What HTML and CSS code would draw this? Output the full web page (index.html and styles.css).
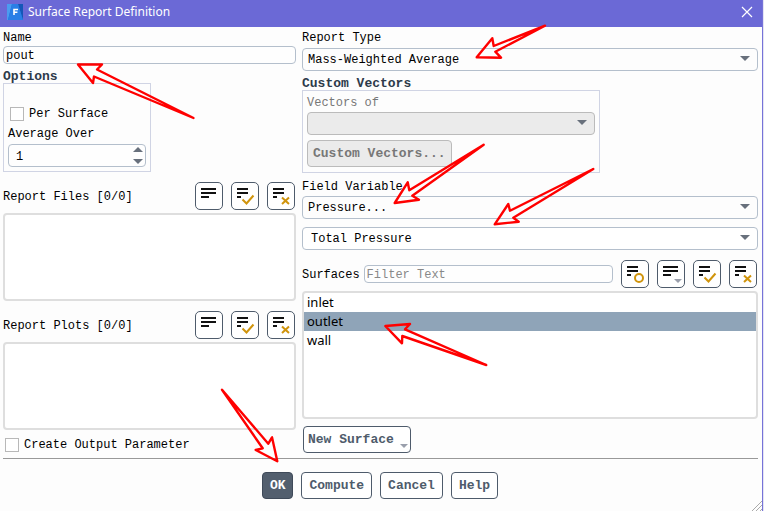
FILE: index.html
```
<!DOCTYPE html>
<html lang="en">
  <head>
    <meta charset="utf-8">
    <title>Surface Report Definition</title>
    <link rel="stylesheet" href="styles.css">
  </head>
  <body>
    <!-- shared icon shapes, all on the 28px button grid -->
    <svg class="defs" width="0" height="0">
      <symbol id="lines" viewBox="0 0 28 28">
        <path d="M6 6h15v2H6zM6 10h15v2H6zM6 14h8v2H6z" fill="#111"/>
      </symbol>
      <symbol id="lines-short" viewBox="0 0 28 28">
        <path d="M6 6h11v2H6zM6 10h11v2H6zM6 14h4v2H6z" fill="#111"/>
      </symbol>
      <symbol id="check" viewBox="0 0 28 28">
        <use href="#lines-short"/>
        <path d="M11.5 17.5l4 4L22.5 13.5" fill="none" stroke="#d0940c" stroke-width="2"/>
      </symbol>
      <symbol id="cross" viewBox="0 0 28 28">
        <use href="#lines-short"/>
        <path d="M15 15.5l7 6.5M22 15.5l-7 6.5" fill="none" stroke="#d0940c" stroke-width="2"/>
      </symbol>
      <symbol id="ring" viewBox="0 0 28 28">
        <use href="#lines-short"/>
        <circle cx="18" cy="18" r="4" fill="none" stroke="#d0940c" stroke-width="2"/>
      </symbol>
      <symbol id="menu" viewBox="0 0 28 28">
        <use href="#lines"/>
        <path d="M17 19h8l-4 4z" fill="#9a9fac"/>
      </symbol>
    </svg>

    <div class="window">
      <header class="titlebar">
        <svg class="logo" viewBox="0 0 16 16">
          <path d="M0 0h16v16H0z" fill="#1c6fd8"/>
          <path d="M0 0h5L1 16H0z" fill="#4b9cf0"/>
          <path d="M11 0h5v16z" fill="#1557b8"/>
          <path d="M5 0h6l5 16H1z" fill="#2a7fe6"/>
          <path d="M7 11V5.5h4M7 8.2h3.4" fill="none" stroke="#fff" stroke-width="1.6"/>
        </svg>
        <h1>Surface Report Definition</h1>
        <button class="close" aria-label="Close">
          <svg width="12" height="12" viewBox="0 0 12 12"><path d="M1 1l10 10M11 1L1 11" stroke="#fff" stroke-width="1.2"/></svg>
        </button>
      </header>

      <main class="columns">
        <section>
          <label class="label" for="name">Name</label>
          <input class="text" id="name" type="text" value="pout">

          <h2>Options</h2>
          <div class="group options">
            <label class="check"><input type="checkbox"> Per Surface</label>
            <label class="label" for="average">Average Over</label>
            <span class="spinner"><input id="average" type="number" value="1"></span>
          </div>

          <div class="toolbar files">
            <label for="files">Report Files [0/0]</label>
            <button class="icon" aria-label="List options"><svg><use href="#lines"/></svg></button>
            <button class="icon" aria-label="Select all"><svg><use href="#check"/></svg></button>
            <button class="icon" aria-label="Deselect all"><svg><use href="#cross"/></svg></button>
          </div>
          <select class="list" id="files" multiple></select>

          <div class="toolbar">
            <label for="plots">Report Plots [0/0]</label>
            <button class="icon" aria-label="List options"><svg><use href="#lines"/></svg></button>
            <button class="icon" aria-label="Select all"><svg><use href="#check"/></svg></button>
            <button class="icon" aria-label="Deselect all"><svg><use href="#cross"/></svg></button>
          </div>
          <select class="list" id="plots" multiple></select>

          <label class="check output"><input type="checkbox"> Create Output Parameter</label>
        </section>

        <section>
          <label class="label" for="type">Report Type</label>
          <span class="dropdown type">
            <select id="type"><option>Mass-Weighted Average</option></select>
          </span>

          <h2>Custom Vectors</h2>
          <div class="group vectors">
            <label class="label" for="vectors">Vectors of</label>
            <span class="dropdown">
              <select id="vectors" disabled></select>
            </span>
            <button class="btn" disabled>Custom Vectors...</button>
          </div>

          <label class="label field" for="field">Field Variable</label>
          <span class="dropdown">
            <select id="field"><option>Pressure...</option></select>
          </span>
          <span class="dropdown sub">
            <select aria-label="Field component"><option>Total Pressure</option></select>
          </span>

          <div class="toolbar">
            <label for="surfaces">Surfaces</label>
            <input class="text filter" type="text" placeholder="Filter Text" aria-label="Filter surfaces">
            <button class="icon" aria-label="Toggle filter"><svg><use href="#ring"/></svg></button>
            <button class="icon" aria-label="List menu"><svg><use href="#menu"/></svg></button>
            <button class="icon" aria-label="Select all"><svg><use href="#check"/></svg></button>
            <button class="icon" aria-label="Deselect all"><svg><use href="#cross"/></svg></button>
          </div>
          <select class="list surfaces" id="surfaces" multiple>
            <option>inlet</option>
            <option selected>outlet</option>
            <option>wall</option>
          </select>

          <button class="btn new">New Surface</button>
        </section>
      </main>

      <footer>
        <button class="btn primary">OK</button>
        <button class="btn">Compute</button>
        <button class="btn">Cancel</button>
        <button class="btn">Help</button>
      </footer>

      <svg class="grip" width="10" height="10" viewBox="0 0 10 10"><path d="M0 10L10 0M4 10l6-6M8 10l2-2" stroke="#aaa"/></svg>

      <!-- red pointers over the dialog -->
      <svg class="pointers" width="764" height="511" viewBox="0 0 764 511">
        <path d="M78 64.5H102L97 69.5L193.5 118L94 76.5L93 83Z"/>
        <path d="M476.7 57.3L492.3 38.3L493.7 46L545 25.7L495.3 51.7L501 57.7Z"/>
        <path d="M394.7 203L407.7 182.3L409.3 190.3L483.7 144.7L412.3 195.7L419 199.7Z"/>
        <path d="M494.7 224.3L508.3 204L510 210.7L593.3 169L513.3 217.7L518.7 221.7Z"/>
        <path d="M385.3 326L410 324L405 329.3L486.3 365L402.3 336L402 343.3Z"/>
        <path d="M277.3 461.3L272 437.3L268.3 443.7L222 389.7L262.7 448.3L255.7 450Z"/>
      </svg>
    </div>
  </body>
</html>
```
FILE: styles.css
```
* {
  box-sizing: border-box;
}
body {
  margin: 0;
  background: #e4e4f4;
  font: 12px/15px "Liberation Mono", monospace;
  color: #000;
}
input, select, button {
  margin: 0;
  font: inherit;
  color: inherit;
}
.defs {
  position: absolute;
}
.window {
  position: relative;
  display: flex;
  flex-direction: column;
  min-height: 100vh;
  margin-right: 1px;
  border-right: 1px solid #7673d8;
  background: #fdfdfd;
}

/* title bar */
.titlebar {
  display: flex;
  align-items: center;
  height: 27px;
  padding: 0 9px 4px 7px;
  background: #6b69d6;
  color: #fff;
}
.logo {
  width: 16px;
  height: 16px;
  margin-right: 5px;
}
h1 {
  flex: 1;
  margin: 0;
  font: 12px/17px "Noto Sans", sans-serif;
}
.close {
  display: flex;
  padding: 0;
  border: 0;
  background: none;
}

/* two columns */
.columns {
  display: grid;
  grid-template-columns: 293fr 456fr;
  gap: 6px;
  margin: 0 4px 0 3px;
  padding: 4px 0 5px;
  border-bottom: 1px solid #999;
}
section {
  min-width: 0;
}
.label {
  display: block;
}
h2 {
  margin: 6px 0 0;
  font-size: 13px;
  line-height: 13px;
  color: #2d3a4a;
}
.text {
  display: block;
  width: 100%;
  height: 18px;
  padding: 2px 2px 0;
  border: 1px solid #b4bfcc;
  border-radius: 4px;
  background: #fefefe;
}
.text::placeholder {
  color: #888;
}
.group {
  border: 1px solid #d0d4e4;
}
.options {
  width: 148px;
  padding: 23px 4px 4px;
}
.check {
  display: flex;
  align-items: center;
  gap: 5px;
  height: 14px;
  padding-left: 2px;
}
.check input {
  appearance: none;
  width: 14px;
  height: 14px;
  border: 1px solid #b8b8b8;
  background: #fff;
}
.options .check {
  margin-bottom: 6px;
}
.output {
  margin-top: 8px;
}

/* number box with up and down arrows */
.spinner {
  display: block;
  position: relative;
  margin-top: 2px;
}
.spinner input {
  appearance: textfield;
  display: block;
  width: 100%;
  height: 23px;
  padding: 2px 7px 0;
  border: 1px solid #b4bfcc;
  border-radius: 4px;
  background: #fefefe;
}
.spinner input::-webkit-inner-spin-button {
  appearance: none;
}
.spinner::before, .spinner::after {
  content: "";
  position: absolute;
  right: 3px;
  border: 5px solid transparent;
}
.spinner::before {
  top: -2px;
  border-bottom-color: #68707c;
}
.spinner::after {
  bottom: -2px;
  border-top-color: #68707c;
}

/* drop-downs */
.dropdown {
  display: block;
  position: relative;
  margin-top: 1px;
}
.dropdown select {
  appearance: none;
  display: block;
  width: 100%;
  height: 23px;
  padding: 2px 24px 0 5px;
  border: 1px solid #b4bfcc;
  border-radius: 4px;
  background: #fdfdfd;
}
.dropdown::after {
  content: "";
  position: absolute;
  top: 8px;
  right: 8px;
  border: 5px solid transparent;
  border-top-color: #68707c;
  border-bottom: 0;
  pointer-events: none;
}
.dropdown select:disabled {
  border-color: #bbb;
  background: #ebebeb;
  opacity: 1;
}
.type {
  margin-top: 2px;
}
.sub {
  margin-top: 8px;
}
.sub select {
  padding-left: 8px;
  background: #fff;
}
.vectors {
  width: 298px;
  max-width: 100%;
  padding: 5px 4px;
  color: #777;
}
.vectors .btn {
  margin-top: 5px;
}
.field {
  margin-top: 7px;
}

/* list boxes */
.toolbar {
  display: flex;
  align-items: center;
  gap: 8px;
  margin: 10px 1px 3px 0;
}
.toolbar label {
  flex: 1;
  padding-top: 2px;
}
.toolbar .filter {
  flex: 1;
  min-width: 0;
  margin-left: -4px;
}
.toolbar label:has(+ .filter) {
  flex: none;
}
.icon {
  width: 28px;
  height: 28px;
  padding: 0;
  border: 1px solid #4e5b6b;
  border-radius: 5px;
  background: #fff;
}
.icon svg {
  display: block;
  width: 28px;
  height: 28px;
  margin: -1px;
}
.list {
  display: block;
  width: 100%;
  height: 88px;
  padding: 0;
  border: 2px solid #dedede;
  border-radius: 4px;
  background: #fff;
  outline: none;
  overflow: hidden;
}
.surfaces {
  height: 128px;
  font: 13px/19px "Noto Sans", sans-serif;
}
.surfaces option {
  min-height: 19px;
  padding: 0 3px;
  color: #000;
}
.surfaces option:checked {
  background: #8fa4b8 linear-gradient(#8fa4b8, #8fa4b8);
}

/* push buttons */
.btn {
  display: block;
  height: 27px;
  padding: 0 5px;
  border: 1px solid #4e5b6b;
  border-radius: 4px;
  background: #fff;
  font-size: 13px;
  font-weight: bold;
  color: #4e5b6b;
}
.btn:disabled {
  border-color: #bbb;
  background: #ebebeb;
  color: #777;
}
.new {
  position: relative;
  margin: 7px 0 0 1px;
  padding: 0 16px 0 4px;
}
.new::after {
  content: "";
  position: absolute;
  right: 2px;
  bottom: 4px;
  border: 4px solid transparent;
  border-top-color: #9a9fac;
  border-bottom: 0;
}
footer {
  display: flex;
  justify-content: center;
  gap: 8px;
  padding: 13px 2px 12px 0;
}
footer .btn {
  padding: 0 7px;
}
footer .primary {
  border-color: #3f4a59;
  background: #535f6e;
  color: #fff;
}

.grip {
  position: absolute;
  right: 0;
  bottom: 0;
}
.pointers {
  position: absolute;
  top: 0;
  left: 0;
  overflow: visible;
  pointer-events: none;
}
.pointers path {
  fill: none;
  stroke: #f00;
  stroke-width: 2.4;
  stroke-linejoin: round;
}
```
